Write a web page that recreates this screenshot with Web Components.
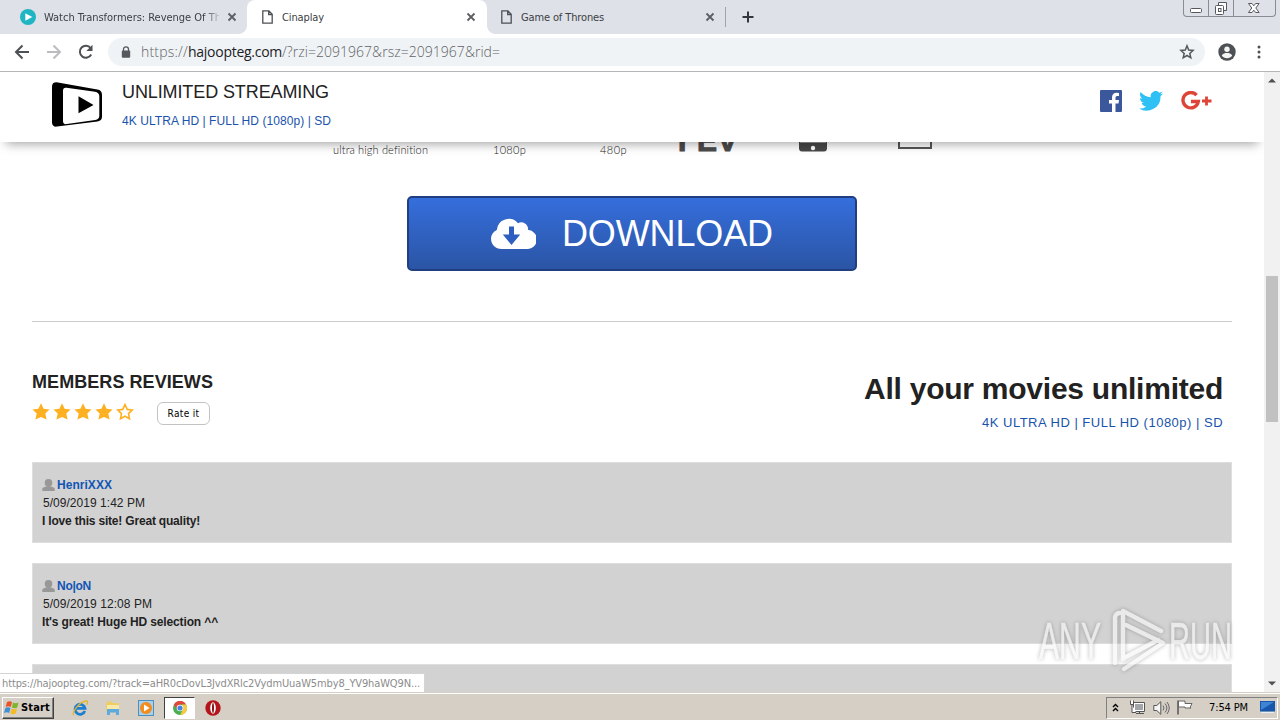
<!DOCTYPE html>
<html lang="en">
<head>
<meta charset="utf-8">
<title>Cinaplay</title>
<style>
    html, body { margin: 0; height: 100%; overflow: hidden; }
    body { font-family: "Liberation Sans", Arial, sans-serif; color: #222; background: #fff; }
</style>
</head>
<body>
<desktop-screen></desktop-screen>

<script>
function define(name, html, base = HTMLElement) {
    customElements.define(name, class extends base {
        constructor() {
            super();
            this.attachShadow({ mode: 'open' }).innerHTML = html;
        }
    });
}

// A single line of text, spaced out or tightened to the given width
class TextRun extends HTMLElement {
    constructor() {
        super();
        this.attachShadow({ mode: 'open' });
        this.shadowRoot.innerHTML = `
            <style>
                :host { display: block; white-space: nowrap; flex: none; }
                span { display: inline-block; }
            </style>
            <span><slot></slot></span>
        `;
    }

    connectedCallback() {
        const width = Number(this.getAttribute('width'));
        const span = this.shadowRoot.querySelector('span');
        const count = this.textContent.length;
        if (!width || !count) return;
        const natural = span.getBoundingClientRect().width;
        this.style.letterSpacing = `${((width - natural) / count).toFixed(3)}px`;
        this.style.width = `${width}px`;
    }
}

const ICONS = {
    play: ['0 0 16 16', '<circle cx="8" cy="8" r="8" fill="#1fb5c3"/><path d="M5.3 4.2 12.3 8l-7 3.8z" fill="#fff"/>'],
    page: ['0 0 11 14', '<path d="M.8.8h6.1l3.3 3.5v8.9H.8zM6.7.8v3.7h3.5" fill="none" stroke="#4c5054" stroke-width="1.3"/>'],
    close: ['0 0 10 10', '<path d="m1.5 1.5 7 7m0-7-7 7" stroke="#5b5e62" stroke-width="1.8"/>'],
    plus: ['0 0 12 12', '<path d="M6 .5v11M.5 6h11" stroke="#33363b" stroke-width="2"/>'],
    back: ['0 0 16 16', '<path d="M15 8H2m6.5-6.5L2 8l6.5 6.5" fill="none" stroke="#4d5054" stroke-width="2"/>'],
    forward: ['0 0 16 16', '<path d="M1 8h13M7.500 1.500 14 8l-6.500 6.500" fill="none" stroke="#babcbe" stroke-width="2"/>'],
    reload: ['0 0 16 16', '<path d="M13.200 10.500A6 6 0 1 1 12.600 4" fill="none" stroke="#4d5054" stroke-width="2"/><path d="M14.500.8V7H8.300z" fill="#4d5054"/>'],
    lock: ['0 0 10 12', '<path d="M2.500 5V3.300a2.500 2.500 0 0 1 5 0V5" fill="none" stroke="#55585c" stroke-width="1.300"/><rect x=".8" y="4.500" width="8.400" height="7.300" rx="1" fill="#55585c"/>'],
    bookmark: ['0 0 16 16', '<path d="m8 1.800 1.700 4.200 4.400.4-3.300 3 1 4.400L8 11.500l-3.800 2.300 1-4.400-3.300-3 4.400-.4z" fill="none" stroke="#55585c" stroke-width="1.500"/>'],
    user: ['0 0 18 18', '<circle cx="9" cy="9" r="8.700" fill="#4d5054"/><circle cx="9" cy="6.300" r="2.700" fill="#f4f4f4"/><path d="M3.800 12.600c1-2 3.200-2.500 5.200-2.500s4.200.5 5.200 2.500c-1.200 1.700-3 2.700-5.200 2.700s-4-1-5.200-2.700z" fill="#f4f4f4"/>'],
    dots: ['0 0 4 14', '<g fill="#4d5054"><circle cx="2" cy="2" r="1.500"/><circle cx="2" cy="7" r="1.500"/><circle cx="2" cy="12" r="1.500"/></g>'],
    minimize: ['0 0 24 16', '<rect x="6.500" y="8.500" width="11" height="4" rx="1" fill="#fff" stroke="#55595f"/>'],
    restore: ['0 0 24 16', '<path d="M9.500 2.500h8v8h-8z" fill="#fff" stroke="#55595f"/><rect x="6.500" y="5.500" width="8" height="9" rx="1" fill="#fff" stroke="#55595f"/><rect x="9.500" y="8.500" width="2.500" height="3" fill="#fff" stroke="#55595f"/>'],
    quit: ['0 0 41 16', '<path d="M14.500 3.500h3.500l1.800 2.300 1.800-2.300h3.500L21.800 8l3.300 4.500h-3.500l-1.800-2.300-1.800 2.300h-3.500L17.800 8z" fill="#fff" stroke="#55595f"/>'],
    cinaplay: ['0 0 50 45', '<path d="M4.500.3C1.500.3 0 1.800 0 4.500v36c0 3 2 4.500 5 4.100l40.500-5.200c3-.4 4.500-1.800 4.500-4.600V13c0-3.200-1.500-4.900-4.700-5.400z" fill="#000"/><path d="M14.500 5.800 43 9.700c2.500.4 4.300 1.900 4.300 4.300v19.700c0 2.500-1.400 3.700-4 4.200l-28.500 4.200c-2.500.4-3.800-.5-3.800-3V8.800c0-2.400 1.200-3.300 3.500-3z" fill="#fff"/><path d="M26.500 14.200v17L41.500 23z" fill="#000"/>'],
    facebook: ['0 0 22 22', '<rect width="22" height="22" rx="1" fill="#3a589b"/><path d="M12 22v-8.500H9V10h3V7.500c0-3 1.800-4.700 4.600-4.700l2.400.1v3.200h-1.700c-1.400 0-1.800.7-1.800 1.800V10H19l-.5 3.500h-3V22z" fill="#fff"/>'],
    twitter: ['0 0 24 20', '<path d="M24 2.400a10 10 0 0 1-2.800.8A5 5 0 0 0 23.300.5c-1 .6-2 1-3.100 1.200a4.900 4.900 0 0 0-8.400 4.500A14 14 0 0 1 1.700 1a4.900 4.900 0 0 0 1.500 6.600A5 5 0 0 1 1 7v.1a4.900 4.900 0 0 0 3.900 4.800 5 5 0 0 1-2.200.1 4.900 4.900 0 0 0 4.600 3.400A9.900 9.900 0 0 1 0 17.500 14 14 0 0 0 21.500 5c1-.7 1.800-1.600 2.500-2.600z" fill="#2fc0f5"/>'],
    google: ['0 0 31 20', '<path d="M15.600 4.200A7.700 7.700 0 1 0 17.300 10.500H10" fill="none" stroke="#dd4538" stroke-width="3.400"/><path d="M25.500 5.500v9M21 10h9.500" stroke="#dd4538" stroke-width="2.800"/>'],
    cloud: ['0 0 45 32', '<path d="M37 12.800a6.800 6.800 0 0 0-10-6.600A12 12 0 0 0 5.800 13 10 10 0 0 0 0 21.500C0 27.500 4.500 32 10.500 32h25a9.600 9.600 0 0 0 1.500-19.200z" fill="#fff"/><path d="M18 9.500h5v8h6.200L20.500 28l-8.700-10.500H18z" fill="#2e5fc0"/>'],
    star: ['0 0 18 18', '<path d="m9 .3 2.600 5.500 6 .7-4.300 4.100 1.300 6L9 13.900l-5.600 2.700 1.300-6L.4 6.500l6-.7z" fill="#fdb022"/>'],
    hollow: ['0 0 18 18', '<path d="m9 1.500 2.200 4.900 5 .6-3.700 3.600 1 5.100L9 13.200l-4.500 2.500 1-5.100L1.800 7l5-.6z" fill="#fff" stroke="#fdb022" stroke-width="1.600"/>'],
    member: ['0 0 13 12', '<path d="M6.500 0c2.700 0 3.800 1.600 3.800 3.900S8.800 8 6.500 8 2.700 6.200 2.700 3.900 3.800 0 6.500 0z" fill="#989898"/><path d="M.3 12V9.800C.3 8.600 2.300 8 4 7.500h5c1.700.5 3.700 1.100 3.700 2.300V12z" fill="#989898"/>'],
    tablet: ['0 0 28 10', '<path d="M0 0h28v7a3 3 0 0 1-3 2.500H3A3 3 0 0 1 0 7z" fill="#484848"/><path d="M1 0h26v1H1z" fill="#999"/><circle cx="14" cy="6" r="2.200" fill="#fff"/>'],
    laptop: ['0 0 34 8', '<path d="M1 0v6h32V0" fill="none" stroke="#555" stroke-width="2"/>'],
    up: ['0 0 8 5', '<path d="M0 4.500h8L4 .5z" fill="#505050"/>'],
    down: ['0 0 8 5', '<path d="M0 .5h8L4 4.500z" fill="#505050"/>'],
    windows: ['0 0 16 16', '<path d="M3 2c2-1.200 3.500-.8 5 0L6.800 7C5 6 3.500 6 1.700 7z" fill="#e8532a"/><path d="M9 2.500c1.800 1 3.400 1 5.500 0L13.300 7.500c-2 1-3.600 1-5.400 0z" fill="#7fb52d"/><path d="M1.400 8C3 7 4.700 7 6.500 8l-1.300 5C3.500 12 2 12 0 13z" fill="#3e8fd8"/><path d="M7.600 8.500c1.800 1 3.400 1 5.400 0L11.800 13.500c-2 1-3.600 1-5.400 0z" fill="#f4bb26"/>'],
    ie: ['0 0 16 16', '<path d="M12.800 11A5 5 0 1 1 13 8.300H4" fill="none" stroke="#1d7fd0" stroke-width="2.800"/><path d="M2 15.200C-1.500 13.500 8 .8 14.400 1c2 .2 1 2.600.4 3.800" fill="none" stroke="#e4b62c" stroke-width="1.300"/>'],
    folder: ['0 0 16 16', '<path d="M1 3 2.500 1.500h4L8 3h6v9H1z" fill="#ecce68"/><path d="M2 5h12v7H2z" fill="#f8e9a7"/><path d="M2 9h12v6h-3v-2.500H5V15H2z" fill="#5caade"/>'],
    media: ['0 0 16 16', '<rect x=".5" y=".5" width="15" height="15" fill="#a6d0ec" stroke="#4e8fbd"/><circle cx="8" cy="8" r="6" fill="#f38b1d"/><path d="M6 4.500v7L11.500 8z" fill="#fff"/>'],
    chrome: ['0 0 14 14', '<circle cx="7" cy="7" r="7" fill="#4aae50"/><path d="M.9 3.500A7 7 0 0 1 13.100 3.500H7L4 8.500z" fill="#e2473a"/><path d="M13.100 3.500A7 7 0 0 1 7 14l3-5.500L9 3.500z" fill="#f8cb3c"/><circle cx="7" cy="7" r="3.300" fill="#fff"/><circle cx="7" cy="7" r="2.600" fill="#4585e8"/>'],
    opera: ['0 0 16 16', '<circle cx="8" cy="8" r="7.700" fill="#b3151b"/><ellipse cx="8" cy="8" rx="2.800" ry="5.800" fill="#fff"/><ellipse cx="8" cy="8" rx="1" ry="5" fill="#84131a"/>'],
    chevrons: ['0 0 7 9', '<path d="m1 4 2.500-2.500L6 4M1 8l2.500-2.500L6 8" fill="none" stroke="#000" stroke-width="1.400"/>'],
    network: ['0 0 16 15', '<path d="M4.500 2.500h11v9h-11z" fill="#fff" stroke="#555"/><path d="M6 4h8v6H6z" fill="#a3a6a8"/><path d="M1.500.5v4h3v-4M3 4.500v8h4" fill="#fff" stroke="#555"/><path d="M7 13.500h8M10.500 11.500v2" stroke="#555"/>'],
    sound: ['0 0 17 14', '<path d="M.8 4.500h3l4-3.800v12.600l-4-3.800h-3z" fill="#f6f6f4" stroke="#555"/><path d="M10 4.500q2 2.500 0 5M12 2.500q3.800 4.500 0 9M14 1q4.500 6 0 12" fill="none" stroke="#666"/>'],
    flag: ['0 0 16 15', '<path d="M1 .5v14" stroke="#555" stroke-width="1.500"/><path d="M1.500 1h6.500v2.500h7l-2 4 1 .5H8V7H1.500z" fill="#fff" stroke="#666"/>'],
    desktop: ['0 0 15 13', '<path d="M0 0h15v10.500H0z" fill="#1756ab"/><path d="M1 1h13L1 9z" fill="#3f84d4"/><path d="M1 11.500h13" stroke="#e8eef5"/>']
};

class UiIcon extends HTMLElement {
    connectedCallback() {
        if (this.shadowRoot) return;
        const [box, body] = ICONS[this.getAttribute('name')];
        const [, , w, h] = box.split(' ');
        const width = this.getAttribute('width') || w;
        const height = this.getAttribute('height') || h;
        this.attachShadow({ mode: 'open' }).innerHTML = `
            <style>
                :host { display: block; flex: none; }
                svg { display: block; }
            </style>
            <svg viewBox="${box}" width="${width}" height="${height}" preserveAspectRatio="none">${body}</svg>
        `;
    }
}

define('browser-tab', `
    <style>
        :host { display: flex; align-items: center; height: 34px; width: 240px; box-sizing: border-box; padding: 0 11px 0 15px; gap: 9px; flex: none; }
        :host([active]) { background: #fff; position: relative; border-radius: 8px 8px 0 0; }
        :host([active])::before, :host([active])::after { content: ""; position: absolute; bottom: 0; width: 8px; height: 8px; }
        :host([active])::before { left: -8px; background: radial-gradient(circle at 0 0, transparent 7.5px, #fff 8px); }
        :host([active])::after { right: -8px; background: radial-gradient(circle at 100% 0, transparent 7.5px, #fff 8px); }
        .title { flex: 1; min-width: 0; overflow: hidden; font: 11px "DejaVu Sans Condensed", "DejaVu Sans", sans-serif; color: #3c4043; }
        :host([fade]) .title { mask-image: linear-gradient(90deg, #000 160px, transparent 178px); }
    </style>
    <slot name="icon"></slot>
    <div class="title"><slot></slot></div>
    <ui-icon name="close"></ui-icon>
`);

define('tab-strip', `
    <style>
        :host { display: flex; height: 34px; background: #dee1e8; }
        .tabs { display: flex; flex: 1; align-items: center; padding-left: 5px; }
        .first { width: 242px; gap: 8px; padding-right: 10px; }
        .last { width: 239px; padding-left: 14px; }
        .sep { width: 1px; height: 20px; background: #a0a3a9; margin: 0 16px 0 -1px; }
        .window { display: flex; height: 16px; border: 1px solid #898d93; border-top: 0; border-radius: 0 0 4px 4px; margin-right: 4px; }
        .window ui-icon + ui-icon { border-left: 1px solid #898d93; }
    </style>
    <div class="tabs">
        <browser-tab class="first" fade><ui-icon slot="icon" name="play"></ui-icon><text-run width="183">Watch Transformers: Revenge Of The</text-run></browser-tab>
        <browser-tab active><ui-icon slot="icon" name="page"></ui-icon><text-run width="42">Cinaplay</text-run></browser-tab>
        <browser-tab class="last"><ui-icon slot="icon" name="page"></ui-icon><text-run width="83">Game of Thrones</text-run></browser-tab>
        <div class="sep"></div>
        <ui-icon name="plus"></ui-icon>
    </div>
    <div class="window">
        <ui-icon name="minimize"></ui-icon>
        <ui-icon name="restore"></ui-icon>
        <ui-icon name="quit"></ui-icon>
    </div>
`);

define('address-bar', `
    <style>
        :host { display: flex; align-items: center; height: 38px; box-sizing: border-box; padding: 0 20px 1px 14px; gap: 16px; background: #fff; border-bottom: 1px solid #b5b6b6; }
        .box { display: flex; align-items: center; flex: 1; height: 28px; box-sizing: border-box; border-radius: 14px; background: #f0f3f5; padding: 0 10px 0 13px; margin-left: -2px; margin-right: -3px; }
        .url { display: flex; flex: 1; margin-left: 10px; margin-top: -1px; font: 300 14px "Open Sans", sans-serif; color: #5f6368; }
        .host { color: #202124; font-weight: 400; }
        .dots { margin-left: 4px; margin-right: -1px; }
        .user { margin-right: 1px; }
    </style>
    <ui-icon name="back"></ui-icon>
    <ui-icon name="forward"></ui-icon>
    <ui-icon name="reload"></ui-icon>
    <div class="box">
        <ui-icon name="lock"></ui-icon>
        <div class="url">
            <text-run width="47">https://</text-run>
            <text-run class="host" width="94">hajoopteg.com</text-run>
            <text-run width="218">/?rzi=2091967&amp;rsz=2091967&amp;rid=</text-run>
        </div>
        <ui-icon name="bookmark"></ui-icon>
    </div>
    <ui-icon class="user" name="user"></ui-icon>
    <ui-icon class="dots" name="dots"></ui-icon>
`);

define('site-header', `
    <style>
        :host { display: flex; height: 70px; box-sizing: border-box; padding: 10px 52px; background: #fff; position: relative; z-index: 1; box-shadow: 0 8px 10px -6px rgba(0, 0, 0, .36); flex: none; }
        .name { flex: 1; margin-left: 20px; }
        .title { font-size: 18px; line-height: 20px; color: #222; }
        .sub { font-size: 12px; line-height: 14px; margin-top: 12px; color: #1a53ac; }
        .social { display: flex; align-items: center; height: 37px; gap: 17px; }
        .social ui-icon:first-child { margin-left: -1px; }
        .social ui-icon:last-child { margin-left: 1px; }
    </style>
    <ui-icon name="cinaplay"></ui-icon>
    <div class="name">
        <text-run class="title" width="207">UNLIMITED STREAMING</text-run>
        <text-run class="sub" width="209">4K ULTRA HD | FULL HD (1080p) | SD</text-run>
    </div>
    <div class="social">
        <ui-icon name="facebook"></ui-icon>
        <ui-icon name="twitter"></ui-icon>
        <ui-icon name="google"></ui-icon>
    </div>
`);

// The lower edge of the format logos, the rest is scrolled under the header
define('format-strip', `
    <style>
        :host { display: flex; height: 16px; padding-left: 333px; font: 300 11px/16px Lato, sans-serif; color: #222; flex: none; }
        .hd { margin-left: 65px; }
        .sd { margin-left: 74px; }
        .tv { display: flex; margin-left: 46px; margin-top: -18px; font: bold 30px/34px "Liberation Sans", sans-serif; color: #4b4b4b; -webkit-text-stroke: 1px #4b4b4b; }
        .t { margin-right: 5px; }
        .tablet { margin-left: 61px; }
        .laptop { margin-left: 71px; }
    </style>
    <text-run width="95">ultra high definition</text-run>
    <text-run class="hd" width="33">1080p</text-run>
    <text-run class="sd" width="27">480p</text-run>
    <div class="tv"><text-run class="t" width="19">T</text-run><text-run width="41">EV</text-run></div>
    <ui-icon class="tablet" name="tablet"></ui-icon>
    <ui-icon class="laptop" name="laptop"></ui-icon>
`);

define('download-button', `
    <style>
        :host { display: flex; align-items: center; width: 450px; height: 75px; box-sizing: border-box; padding: 0 0 0 82px; border: 2px solid #213f80; border-radius: 5px; background: linear-gradient(#356edc, #2b55a5); color: #fff; font-size: 36px; line-height: 40px; }
        .label { margin: 1px 0 0 26px; }
        ui-icon { margin-bottom: 1px; }
    </style>
    <ui-icon name="cloud"></ui-icon>
    <text-run class="label" width="211">DOWNLOAD</text-run>
`);

define('star-rating', `
    <style>
        :host { display: flex; align-items: center; gap: 3px; }
        button { width: 53px; height: 23px; margin: 3px 0 0 20px; padding: 0; border: 1px solid #c3c3c3; border-radius: 6px; background: #fff; color: #000; font: 10px "DejaVu Sans Condensed", "DejaVu Sans", sans-serif; display: flex; align-items: center; justify-content: center; }
    </style>
    <ui-icon name="star"></ui-icon>
    <ui-icon name="star"></ui-icon>
    <ui-icon name="star"></ui-icon>
    <ui-icon name="star"></ui-icon>
    <ui-icon name="hollow"></ui-icon>
    <button><text-run width="32">Rate it</text-run></button>
`);

define('review-card', `
    <style>
        :host { display: block; height: 81px; box-sizing: border-box; padding: 13px 9px; border: 1px solid #dedede; background: #d2d2d2; font-size: 12px; line-height: 18px; flex: none; }
        .user { display: flex; align-items: center; gap: 2px; font-weight: bold; color: #1155b5; }
        .date { margin-left: 1px; display: block; }
        .text { display: block; font-weight: bold; }
    </style>
    <div class="user"><ui-icon name="member"></ui-icon><slot name="user"></slot></div>
    <div class="date"><slot name="date"></slot></div>
    <div class="text"><slot></slot></div>
`);

define('site-page', `
    <style>
        :host { display: flex; flex-direction: column; flex: 1; min-width: 0; overflow: hidden; background: #fff; }
        download-button { margin: 38px auto 0 407px; flex: none; }
        .rule { height: 1px; background: #ccc; margin: 50px 32px 0; flex: none; }
        .intro { display: flex; justify-content: space-between; height: 90px; padding: 50px 41px 0 32px; flex: none; }
        .members { font-size: 18px; line-height: 20px; font-weight: bold; }
        star-rating { margin-top: 7px; }
        .claim { display: flex; flex-direction: column; align-items: flex-end; }
        .big { font-size: 30px; line-height: 34px; font-weight: bold; }
        .sub { font-size: 13px; line-height: 16px; margin-top: 9px; color: #1a53ac; }
        .reviews { display: flex; flex-direction: column; gap: 20px; padding: 0 32px; }
    </style>
    <site-header></site-header>
    <format-strip></format-strip>
    <download-button></download-button>
    <div class="rule"></div>
    <div class="intro">
        <div>
            <text-run class="members" width="181">MEMBERS REVIEWS</text-run>
            <star-rating></star-rating>
        </div>
        <div class="claim">
            <text-run class="big" width="359">All your movies unlimited</text-run>
            <text-run class="sub" width="241">4K ULTRA HD | FULL HD (1080p) | SD</text-run>
        </div>
    </div>
    <div class="reviews">
        <review-card>
            <text-run slot="user" width="55">HenriXXX</text-run>
            <text-run slot="date" width="102">5/09/2019 1:42 PM</text-run>
            <text-run width="158">I love this site! Great quality!</text-run>
        </review-card>
        <review-card>
            <text-run slot="user" width="34">No|oN</text-run>
            <text-run slot="date" width="109">5/09/2019 12:08 PM</text-run>
            <text-run width="176">It's great! Huge HD selection ^^</text-run>
        </review-card>
        <review-card></review-card>
    </div>
`);

define('scroll-bar', `
    <style>
        :host { display: flex; flex-direction: column; align-items: center; width: 16px; background: #f1f1f1; padding: 6px 0; box-sizing: border-box; flex: none; }
        .track { flex: 1; }
        .thumb { width: 12px; height: 146px; margin-top: 193px; background: #c1c1c1; }
    </style>
    <ui-icon name="up"></ui-icon>
    <div class="track"><div class="thumb"></div></div>
    <ui-icon name="down"></ui-icon>
`);

define('status-bubble', `
    <style>
        :host { position: absolute; left: 0; bottom: 0; z-index: 2; width: 425px; height: 19px; box-sizing: border-box; padding-left: 2px; background: #fff; border: solid #d4d4d4; border-width: 1px 1px 0 0; font: 11px/19px "DejaVu Sans Condensed", "DejaVu Sans", sans-serif; color: #8c8c8c; }
    </style>
    <text-run width="418">https://hajoopteg.com/?track=aHR0cDovL3JvdXRlc2VydmUuaW5mby8_YV9haWQ9N...</text-run>
`);

define('any-run', `
    <style>
        :host { position: absolute; right: 42px; bottom: 16px; z-index: 3; filter: drop-shadow(0 0 2px rgba(80, 80, 80, .6)); opacity: .68; }
        svg { display: block; overflow: visible; }
        text { font: 51px "Liberation Sans", sans-serif; fill: #f6f6f6; stroke: #f6f6f6; stroke-width: .5; }
    </style>
    <svg width="200" height="70" viewBox="0 0 200 70">
        <text x="1" y="53" textLength="62" lengthAdjust="spacingAndGlyphs">ANY</text>
        <g fill="none" stroke="#f6f6f6" stroke-width="4.5" stroke-linejoin="round" stroke-linecap="round">
            <path d="M77 57V11q1-4 5-4"/>
            <path d="M123 25 85 5v48"/>
            <path d="M88 19 125 37 86 63"/>
            <path d="m86 52 34-18"/>
        </g>
        <text x="131" y="53" textLength="63" lengthAdjust="spacingAndGlyphs">RUN</text>
    </svg>
`);

define('task-bar', `
    <style>
        :host { display: flex; align-items: center; height: 28px; box-sizing: border-box; padding: 2px 2px 0; background: #d6cfc6; border-top: 1px solid #d6cfc6; box-shadow: inset 0 1px #fff; font: 11px "DejaVu Sans Condensed", "DejaVu Sans", sans-serif; color: #000; }
        .start { display: flex; align-items: center; width: 52px; height: 22px; box-sizing: border-box; gap: 1px; padding-left: 1px; border: 1px solid; border-color: #fff #404040 #404040 #fff; box-shadow: inset -1px -1px #808080; font: bold 11px "DejaVu Sans Condensed", "DejaVu Sans", sans-serif; }
        .quick { display: flex; align-items: center; flex: 1; margin-left: 18px; gap: 17px; }
        .open { display: flex; align-items: center; justify-content: center; width: 31px; height: 22px; box-sizing: border-box; margin: 0 -7px; border: 1px solid; border-color: #404040 #fff #fff #404040; background: #fff; }
        .tray { display: flex; align-items: center; height: 22px; width: 172px; box-sizing: border-box; border: 1px solid; border-color: #808080 #fff #fff #808080; padding-left: 5px; }
        .chevrons { margin-right: 10px; }
        .sound { margin: 0 7px 0 8px; }
        .clock { margin: 0 12px 0 16px; }
    </style>
    <div class="start"><ui-icon name="windows"></ui-icon><text-run width="29">Start</text-run></div>
    <div class="quick">
        <ui-icon name="ie"></ui-icon>
        <ui-icon name="folder"></ui-icon>
        <ui-icon name="media"></ui-icon>
        <div class="open"><ui-icon name="chrome"></ui-icon></div>
        <ui-icon name="opera"></ui-icon>
    </div>
    <div class="tray">
        <ui-icon class="chevrons" name="chevrons"></ui-icon>
        <ui-icon name="network"></ui-icon>
        <ui-icon class="sound" name="sound"></ui-icon>
        <ui-icon name="flag"></ui-icon>
        <text-run class="clock" width="39">7:54 PM</text-run>
        <ui-icon name="desktop"></ui-icon>
    </div>
`);

define('desktop-screen', `
    <style>
        :host { display: flex; flex-direction: column; width: 1280px; height: 720px; position: relative; overflow: hidden; }
        .view { display: flex; flex: 1; min-height: 0; position: relative; }
    </style>
    <tab-strip></tab-strip>
    <address-bar></address-bar>
    <div class="view">
        <site-page></site-page>
        <scroll-bar></scroll-bar>
        <status-bubble></status-bubble>
        <any-run></any-run>
    </div>
    <task-bar></task-bar>
`);

customElements.define('ui-icon', UiIcon);
customElements.define('text-run', TextRun);
</script>
</body>
</html>
